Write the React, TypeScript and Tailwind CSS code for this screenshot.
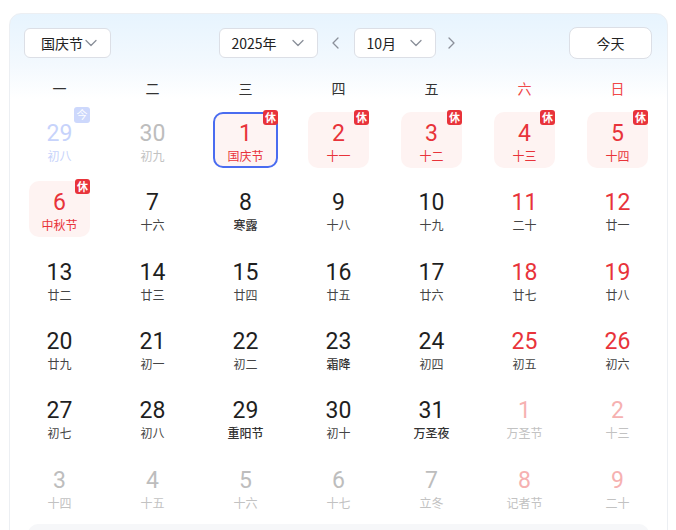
import React from 'react';

type Day = {
  n: number;
  lunar: string;
  kind?: 'prev' | 'today' | 'next';
  weekend?: boolean;
  holiday?: boolean;
  selected?: boolean;
  strong?: boolean;
};

const weeks: Day[][] = [
  [
    { n: 29, lunar: '初八', kind: 'today' },
    { n: 30, lunar: '初九', kind: 'prev' },
    { n: 1, lunar: '国庆节', holiday: true, selected: true },
    { n: 2, lunar: '十一', holiday: true },
    { n: 3, lunar: '十二', holiday: true },
    { n: 4, lunar: '十三', holiday: true, weekend: true },
    { n: 5, lunar: '十四', holiday: true, weekend: true },
  ],
  [
    { n: 6, lunar: '中秋节', holiday: true },
    { n: 7, lunar: '十六' },
    { n: 8, lunar: '寒露', strong: true },
    { n: 9, lunar: '十八' },
    { n: 10, lunar: '十九' },
    { n: 11, lunar: '二十', weekend: true },
    { n: 12, lunar: '廿一', weekend: true },
  ],
  [
    { n: 13, lunar: '廿二' },
    { n: 14, lunar: '廿三' },
    { n: 15, lunar: '廿四' },
    { n: 16, lunar: '廿五' },
    { n: 17, lunar: '廿六' },
    { n: 18, lunar: '廿七', weekend: true },
    { n: 19, lunar: '廿八', weekend: true },
  ],
  [
    { n: 20, lunar: '廿九' },
    { n: 21, lunar: '初一' },
    { n: 22, lunar: '初二' },
    { n: 23, lunar: '霜降', strong: true },
    { n: 24, lunar: '初四' },
    { n: 25, lunar: '初五', weekend: true },
    { n: 26, lunar: '初六', weekend: true },
  ],
  [
    { n: 27, lunar: '初七' },
    { n: 28, lunar: '初八' },
    { n: 29, lunar: '重阳节', strong: true },
    { n: 30, lunar: '初十' },
    { n: 31, lunar: '万圣夜', strong: true },
    { n: 1, lunar: '万圣节', kind: 'next', weekend: true },
    { n: 2, lunar: '十三', kind: 'next', weekend: true },
  ],
  [
    { n: 3, lunar: '十四', kind: 'next' },
    { n: 4, lunar: '十五', kind: 'next' },
    { n: 5, lunar: '十六', kind: 'next' },
    { n: 6, lunar: '十七', kind: 'next' },
    { n: 7, lunar: '立冬', kind: 'next' },
    { n: 8, lunar: '记者节', kind: 'next', weekend: true },
    { n: 9, lunar: '二十', kind: 'next', weekend: true },
  ],
];

const Chevron = ({ dir = 'down' }: { dir?: 'down' | 'left' | 'right' }) => {
  const d = dir === 'down' ? 'M2 4.5l5 5 5-5' : dir === 'left' ? 'M9 2L4 7l5 5' : 'M5 2l5 5-5 5';
  return (
    <svg width="14" height="14" viewBox="0 0 14 14" fill="none" stroke="#8a8f99" strokeWidth="1.3" strokeLinecap="round" strokeLinejoin="round">
      <path d={d} />
    </svg>
  );
};

const Select = ({ label, className }: { label: string; className: string }) => (
  <div className={`flex h-[30px] items-center justify-between rounded-[6px] border border-[#dcdfe6] bg-white text-[14px] text-[#222] ${className}`}>
    <span>{label}</span>
    <Chevron />
  </div>
);

const Cell = ({ d }: { d: Day }) => {
  let num = 'text-[#1f1f1f]';
  let lun = 'text-[#444]';
  if (d.kind === 'today') {
    num = 'text-[#c7d3fb]';
    lun = 'text-[#c7d3fb]';
  } else if (d.kind === 'prev' || d.kind === 'next') {
    num = d.weekend ? 'text-[#f6b1b1]' : 'text-[#bdbdbd]';
    lun = 'text-[#c2c2c2]';
  } else if (d.holiday) {
    num = 'text-[#e8333a]';
    lun = 'text-[#e8333a]';
  } else if (d.weekend) {
    num = 'text-[#e8333a]';
  }
  if (d.strong) lun = 'text-[#333] font-medium';

  const box = d.selected
    ? 'w-[65px] border-2 border-[#4a6cf0] bg-[#fef4f3] pt-[6.5px]'
    : d.holiday
      ? 'w-[61px] bg-[#fef3f2] pt-[8.5px]'
      : 'w-[61px] pt-[8.5px]';

  return (
    <div className="flex h-[69.3px] items-center justify-center">
      <div className={`relative flex h-[56px] flex-col items-center rounded-[10px] ${box}`}>
        <span className={`font-['Roboto','Noto_Sans_CJK_SC',sans-serif] text-[23px] leading-[27px] font-normal ${num}`}>{d.n}</span>
        <span className={`text-[12px] leading-[17px] ${lun}`}>{d.lunar}</span>
        {d.holiday && d.kind === undefined && (
          <span className={`absolute ${d.selected ? '-top-[4px] -right-[2px]' : '-top-[2px] right-0'} flex h-[15px] w-[15px] items-center justify-center rounded-[3px] bg-[#e8333a] text-[11px] leading-none font-bold text-white`}>
            休
          </span>
        )}
        {d.kind === 'today' && (
          <span className="absolute -top-[5px] right-0 flex h-[16px] w-[16px] items-center justify-center rounded-[3px] bg-[#cdd8fc] text-[11px] leading-none text-white">
            今
          </span>
        )}
      </div>
    </div>
  );
};

export default function App() {
  const heads = ['一', '二', '三', '四', '五', '六', '日'];
  return (
    <div className="h-[530px] overflow-hidden bg-white pt-[13px] pl-[9px] font-['Noto_Sans_CJK_SC','Noto_Sans',sans-serif]">
      <div className="w-[659px] rounded-[12px] border border-[#eceff3] bg-[linear-gradient(to_bottom,#e7f4fe_0px,#f3f9fe_50px,#ffffff_85px)]">
        {/* Header */}
        <div className="grid grid-cols-[1fr_auto_1fr] items-center pt-[13px] pr-[15px] pl-[14px]">
          <div>
            <Select label="国庆节" className="w-[87px] pr-[12px] pl-[16px]" />
          </div>
          <div className="ml-[8px] flex items-center">
            <Select label="2025年" className="w-[99px] pr-[12px] pl-[12px]" />
            <div className="flex w-[36px] justify-center">
              <Chevron dir="left" />
            </div>
            <Select label="10月" className="w-[82px] pr-[12px] pl-[12px]" />
            <div className="flex w-[30px] justify-center">
              <Chevron dir="right" />
            </div>
          </div>
          <div className="flex justify-end">
            <div className="flex h-[32px] w-[83px] items-center justify-center rounded-[8px] border border-[#dcdfe6] bg-white text-[14px] text-[#222]">
              今天
            </div>
          </div>
        </div>

        {/* Week header */}
        <div className="mx-auto grid w-[651px] grid-cols-7 pt-[19px] pb-[7px]">
          {heads.map((h, i) => (
            <div key={h} className={`text-center text-[14px] leading-[20px] ${i >= 5 ? 'text-[#f04848]' : 'text-[#333]'}`}>
              {h}
            </div>
          ))}
        </div>

        {/* Days */}
        <div className="mx-auto grid w-[651px] grid-cols-7">
          {weeks.flat().map((d, i) => (
            <Cell key={i} d={d} />
          ))}
        </div>

        <div className="mx-[18px] mt-[3px] h-[40px] rounded-[10px] bg-[#f6f7f9]" />
      </div>
    </div>
  );
}
